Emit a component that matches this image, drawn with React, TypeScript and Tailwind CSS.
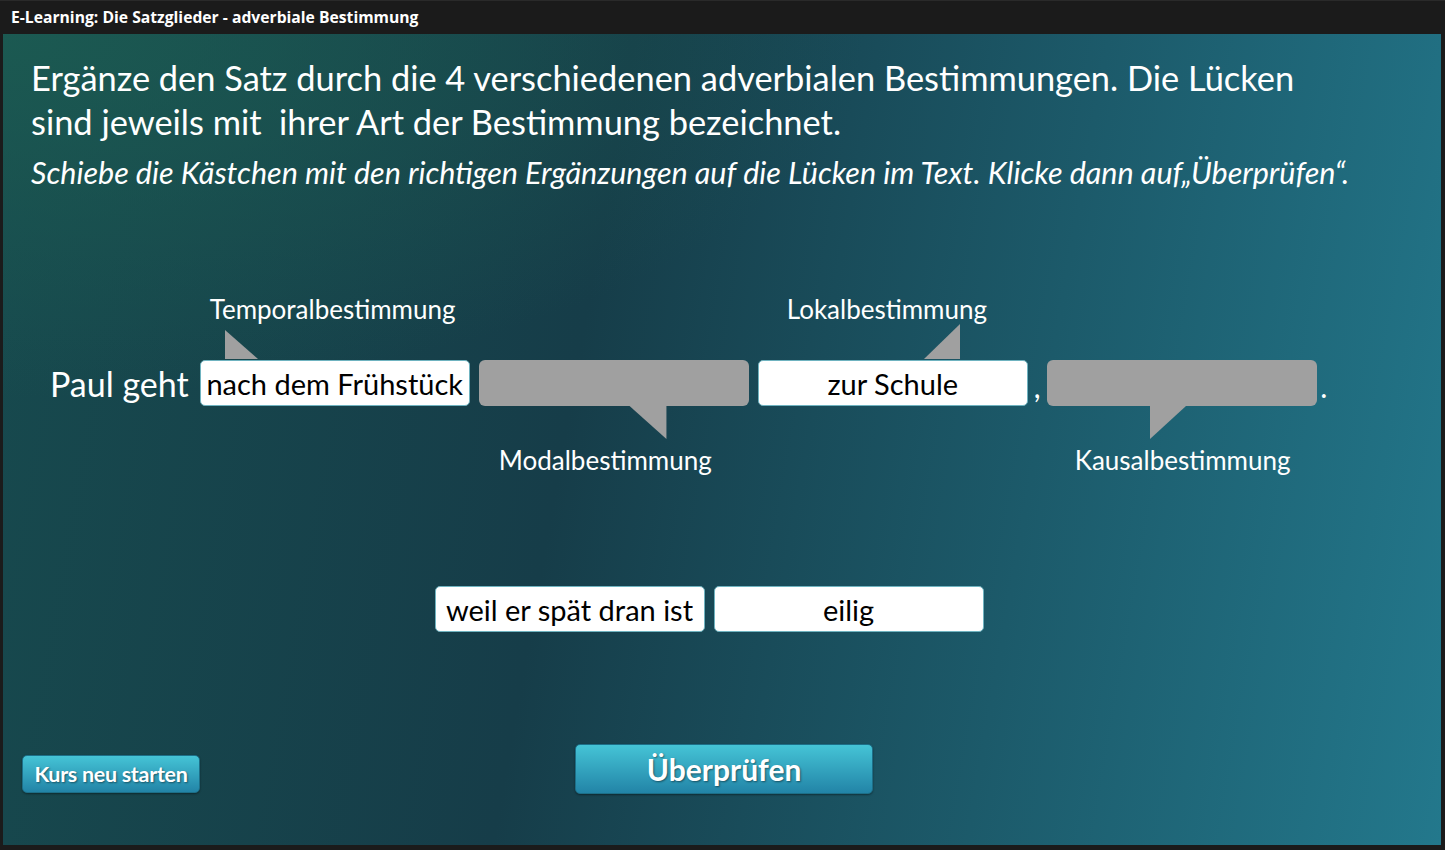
import React from 'react';

const GRAY = '#a0a0a0';

type Slot = {
  text?: string;
  filled: boolean;
  label: string;
  side: 'top' | 'bottom';
  labelPad: string;
  pointer: React.ReactNode;
};

function Pointer({ d, w, h, className }: { d: string; w: number; h: number; className: string }) {
  return (
    <svg width={w} height={h} viewBox={`0 0 ${w} ${h}`} className={`block ${className}`}>
      <path d={d} fill={GRAY} />
    </svg>
  );
}

const slots: Slot[] = [
  {
    text: 'nach dem Frühstück',
    filled: true,
    label: 'Temporalbestimmung',
    side: 'top',
    labelPad: 'pl-[10px]',
    pointer: <Pointer w={33} h={29} d="M0 0 L0 29 L33 29 Z" className="ml-[25px]" />,
  },
  {
    filled: false,
    label: 'Modalbestimmung',
    side: 'bottom',
    labelPad: 'pl-[20px]',
    pointer: <Pointer w={38} h={34} d="M0 0 L38 0 L38 34 Z" className="ml-[150px]" />,
  },
  {
    text: 'zur Schule',
    filled: true,
    label: 'Lokalbestimmung',
    side: 'top',
    labelPad: 'pl-[29px]',
    pointer: <Pointer w={36} h={35} d="M36 0 L36 35 L0 35 Z" className="ml-[166px]" />,
  },
  {
    filled: false,
    label: 'Kausalbestimmung',
    side: 'bottom',
    labelPad: 'pl-[28px]',
    pointer: <Pointer w={36} h={33} d="M0 0 L36 0 L0 33 Z" className="ml-[103px]" />,
  },
];

function Box({ text, filled }: { text?: string; filled: boolean }) {
  return filled ? (
    <div className="w-[270px] h-[46px] rounded-[5px] bg-white border border-[#6fb3c0] flex items-center justify-center text-[29px] text-black leading-none whitespace-nowrap">
      {text}
    </div>
  ) : (
    <div className="w-[270px] h-[46px] rounded-[6px] bg-[#a0a0a0]" />
  );
}

function SlotColumn({ slot }: { slot: Slot }) {
  return (
    <div className="flex flex-col w-[270px]">
      <div className="h-[66px] flex flex-col">
        {slot.side === 'top' && (
          <>
            <div className={`${slot.labelPad} text-[26px] leading-[30px] text-white whitespace-nowrap`}>{slot.label}</div>
            <div className="flex-1 flex items-end pb-[1px]">{slot.pointer}</div>
          </>
        )}
      </div>
      <Box text={slot.text} filled={slot.filled} />
      <div className="h-[69px] flex flex-col">
        {slot.side === 'bottom' && (
          <>
            {slot.pointer}
            <div className={`${slot.labelPad} mt-[6px] text-[26px] leading-[30px] text-white whitespace-nowrap`}>{slot.label}</div>
          </>
        )}
      </div>
    </div>
  );
}

export default function App() {
  return (
    <div className="w-[1445px] h-[850px] bg-[#1b1b1b] flex flex-col overflow-hidden font-['Lato','Open_Sans',sans-serif]">
      {/* Title bar */}
      <div className="h-[34px] shrink-0 flex items-center px-[11px] border-t border-[#2a2a2a]">
        <span className="font-['Open_Sans',sans-serif] font-bold text-[15.7px] text-white">
          E-Learning: Die Satzglieder - adverbiale Bestimmung
        </span>
      </div>

      {/* Slide */}
      <div className="ml-[3px] mr-[4px] mb-[5px] flex-1 flex flex-col text-white bg-[radial-gradient(ellipse_60%_45%_at_0%_0%,rgba(28,92,82,0.85),transparent),linear-gradient(100deg,#174a4e_0%,#163d49_40%,#1c5a6a_70%,#23788c_100%)]">
        <div className="pl-[28px] pt-[22px]">
          <h1 className="text-[34.4px] leading-[44px] font-normal whitespace-nowrap">
            Ergänze den Satz durch die 4 verschiedenen adverbialen Bestimmungen. Die Lücken
            <br />
            sind jeweils mit&nbsp; ihrer Art der Bestimmung bezeichnet.
          </h1>
          <p className="mt-[10px] text-[30.5px] leading-[36px] italic whitespace-nowrap">
            Schiebe die Kästchen mit den richtigen Ergänzungen auf die Lücken im Text. Klicke dann auf„Überprüfen“.
          </p>
        </div>

        {/* Sentence */}
        <div className="mt-[104px] flex items-start pl-[47px]">
          <div className="mt-[66px] h-[46px] flex items-center text-[34px] mr-[11px] whitespace-nowrap">Paul geht</div>
          <SlotColumn slot={slots[0]} />
          <div className="w-[9px]" />
          <SlotColumn slot={slots[1]} />
          <div className="w-[9px]" />
          <SlotColumn slot={slots[2]} />
          <div className="mt-[66px] h-[46px] w-[19px] flex items-end justify-center text-[30px] leading-[40px]">,</div>
          <SlotColumn slot={slots[3]} />
          <div className="mt-[66px] h-[46px] w-[14px] flex items-end justify-center text-[30px] leading-[40px]">.</div>
        </div>

        {/* Answer options */}
        <div className="mt-[111px] flex justify-center gap-[9px] pr-[26px]">
          <Box text="weil er spät dran ist" filled />
          <Box text="eilig" filled />
        </div>

        {/* Buttons */}
        <div className="mt-auto mb-[51px] flex items-end pl-[19px]">
          <button className="w-[178px] h-[38px] rounded-[5px] bg-[linear-gradient(#45c4d6,#2284a7)] border border-[#1d6f88] shadow-[0_1px_2px_rgba(0,0,0,0.4)] text-[21.5px] font-bold text-white tracking-[-0.3px] [text-shadow:1px_1px_2px_rgba(0,0,0,0.45)] mb-[1px]">
            Kurs neu starten
          </button>
          <button className="ml-[375px] w-[298px] h-[50px] rounded-[5px] bg-[linear-gradient(#45c4d6,#2284a7)] border border-[#1d6f88] shadow-[0_1px_2px_rgba(0,0,0,0.4)] text-[30px] font-bold text-white [text-shadow:1px_1px_2px_rgba(0,0,0,0.45)]">
            Überprüfen
          </button>
        </div>
      </div>
    </div>
  );
}
